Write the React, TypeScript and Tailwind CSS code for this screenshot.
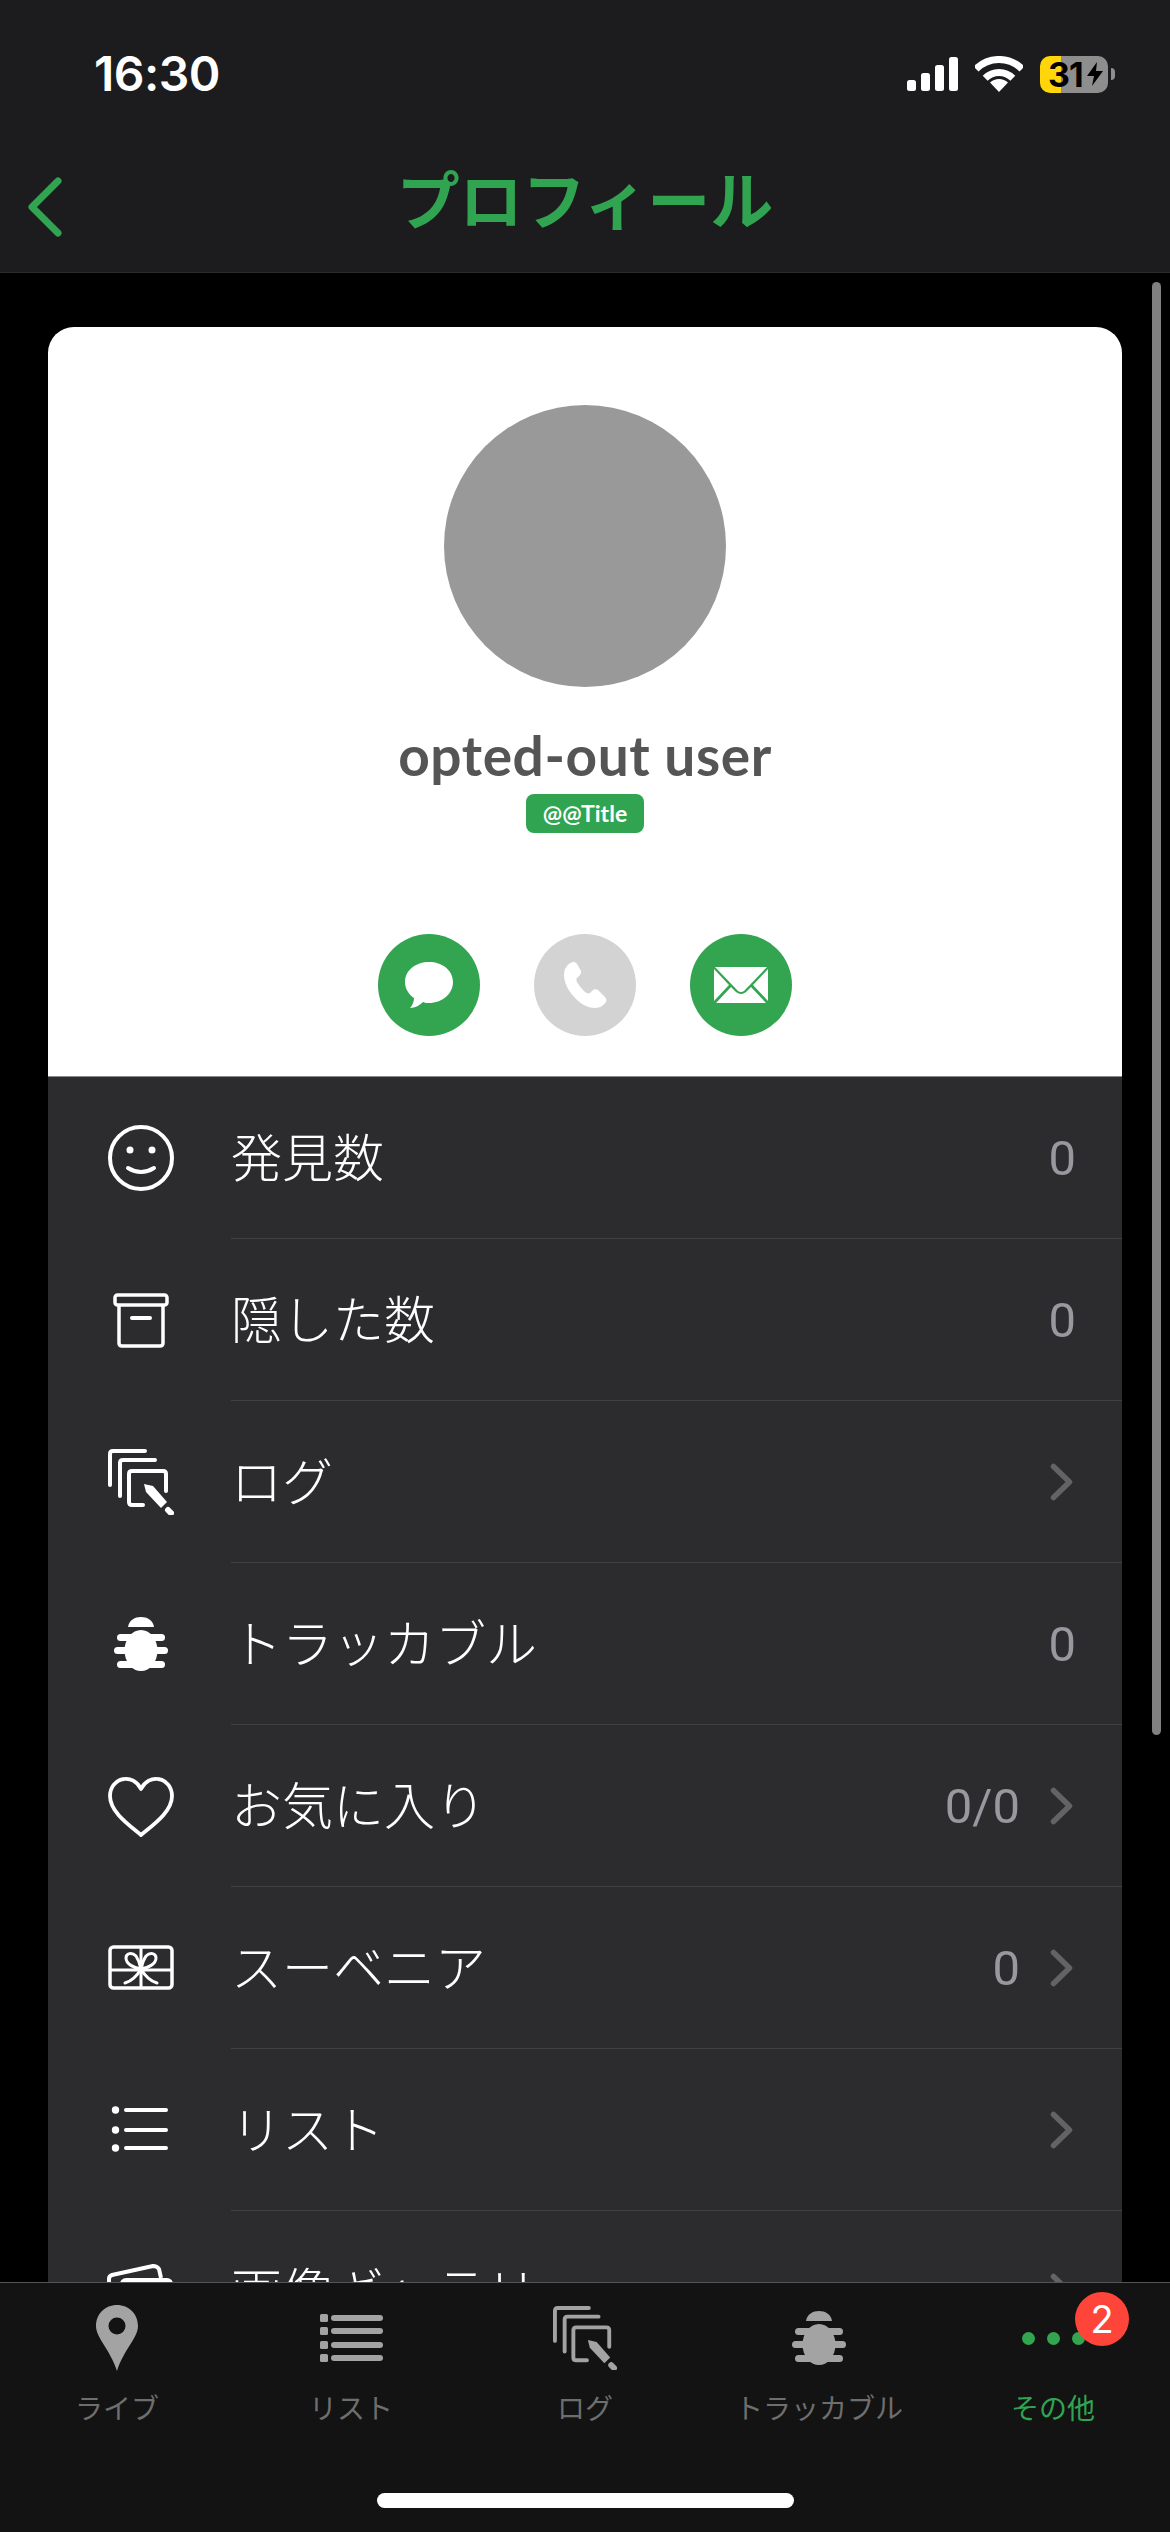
import React from 'react';

const GREEN = '#30a451';

function LogIcon({ color, className }: { color: string; className: string }) {
    return (
        <svg viewBox="0 0 66 66" className={className} fill="none" stroke={color} strokeWidth="4" strokeLinecap="round">
            <path d="M2 36V5Q2 2 5 2H37" />
            <path d="M12 47V14Q12 11 15 11H47" />
            <path d="M35 56H24Q21 56 21 53V25Q21 22 24 22H55Q58 22 58 25V42" />
            <path d="M36 35L45 37L59 53L53 59L38 43Z" fill={color} stroke="none" />
            <path d="M60 61L63 64" strokeWidth="6" />
        </svg>
    );
}

function BugIcon({ color, className }: { color: string; className: string }) {
    return (
        <svg viewBox="0 0 54 54" className={className} fill={color}>
            <path d="M14 10C15 3 21 0 27 0C33 0 39 3 40 10Z" />
            <ellipse cx="27" cy="33.5" rx="16.5" ry="20.5" />
            <rect x="3" y="17" width="48" height="7" rx="3.5" />
            <rect x="0" y="30" width="54" height="7" rx="3.5" />
            <rect x="3" y="44" width="48" height="7" rx="3.5" />
        </svg>
    );
}

const SmileIcon = () => (
    <svg viewBox="0 0 72 72" className="w-[72px] h-[72px]" fill="none" stroke="#fff" strokeWidth="4">
        <circle cx="36" cy="36" r="31" />
        <circle cx="25" cy="28" r="3.5" fill="#fff" stroke="none" />
        <circle cx="47" cy="28" r="3.5" fill="#fff" stroke="none" />
        <path d="M23 46Q36 54 49 46" strokeLinecap="round" />
    </svg>
);

const BoxIcon = () => (
    <svg viewBox="0 0 72 72" className="w-[72px] h-[72px]" fill="none" stroke="#fff" strokeWidth="3.5">
        <rect x="10" y="11" width="52" height="10" rx="2.5" />
        <path d="M14 21V59Q14 62 17 62H55Q58 62 58 59V21" />
        <path d="M27 34H45" strokeLinecap="round" strokeWidth="4" />
    </svg>
);

const HeartIcon = () => (
    <svg viewBox="0 0 72 72" className="w-[72px] h-[72px]" fill="none" stroke="#fff" strokeWidth="3.8" strokeLinejoin="round">
        <path d="M36 19C32 11 25 8 19 9C10 10 5 18 5 26C5 42 24 55 36 65C48 55 67 42 67 26C67 18 62 10 53 9C47 8 40 11 36 19Z" />
    </svg>
);

const GiftIcon = () => (
    <svg viewBox="0 0 72 72" className="w-[72px] h-[72px]" fill="none" stroke="#fff" strokeWidth="3">
        <rect x="5" y="15" width="62" height="41" rx="3.5" strokeWidth="3.5" />
        <path d="M5 38H67M36 15V56" />
        <path d="M36 37C29 36 21 32 21 26C21 21 27 20 31 24C33 27 35 32 36 37C37 32 39 27 41 24C45 20 51 21 51 26C51 32 43 36 36 37Z" />
        <path d="M36 37C32 44 27 49 20 51M36 37C40 44 45 49 52 51" strokeLinecap="round" />
    </svg>
);

const ListIcon = () => (
    <svg viewBox="0 0 72 72" className="w-[72px] h-[72px]" fill="#fff">
        <circle cx="10.5" cy="16" r="3.7" />
        <circle cx="10.5" cy="36" r="3.7" />
        <circle cx="10.5" cy="54" r="3.7" />
        <rect x="19" y="14" width="44" height="4" rx="2" />
        <rect x="19" y="34" width="44" height="4" rx="2" />
        <rect x="19" y="52" width="44" height="4" rx="2" />
    </svg>
);

const GalleryIcon = () => (
    <svg viewBox="0 0 72 72" className="w-[72px] h-[72px]" fill="none" stroke="#fff" strokeWidth="4" strokeLinejoin="round">
        <path d="M4 40V23Q4 20 7 19L48 10Q52 10 54 13L56 22" />
        <rect x="17" y="24" width="49" height="40" rx="4" />
    </svg>
);

const rows = [
    { label: '発見数', icon: <SmileIcon />, value: '0', chevron: false },
    { label: '隠した数', icon: <BoxIcon />, value: '0', chevron: false },
    { label: 'ログ', icon: <LogIcon color="#fff" className="w-[66px] h-[66px] mx-[3px]" />, value: '', chevron: true },
    { label: 'トラッカブル', icon: <BugIcon color="#fff" className="w-[54px] h-[54px] mx-[9px]" />, value: '0', chevron: false },
    { label: 'お気に入り', icon: <HeartIcon />, value: '0/0', chevron: true },
    { label: 'スーベニア', icon: <GiftIcon />, value: '0', chevron: true },
    { label: 'リスト', icon: <ListIcon />, value: '', chevron: true },
    { label: '画像ギャラリー', icon: <GalleryIcon />, value: '', chevron: true },
];

function Chevron() {
    return (
        <svg viewBox="0 0 23 38" className="w-[23px] h-[38px] shrink-0" fill="none" stroke="#636366" strokeWidth="5.5" strokeLinecap="round" strokeLinejoin="round">
            <path d="M3.5 3.5L19.500 19L3.500 34.500" />
        </svg>
    );
}

function StatusBar() {
    return (
        <div className="flex items-center justify-between pt-[53px] pl-[94px] pr-[55px]">
            <span className="text-[48px] leading-[42px] font-semibold text-white font-['Inter',sans-serif] tracking-[-0.5px]">16:30</span>
            <div className="flex items-center">
                <svg viewBox="0 0 51 34" className="w-[51px] h-[34px]" fill="#fff">
                    <rect x="0" y="23" width="9" height="11" rx="2.5" />
                    <rect x="14" y="16" width="9" height="18" rx="2.5" />
                    <rect x="28" y="8" width="9" height="26" rx="2.5" />
                    <rect x="42" y="0" width="9" height="34" rx="2.5" />
                </svg>
                <svg viewBox="0 0 48 36" className="w-[48px] h-[36px] ml-[17px]" fill="none" stroke="#fff" strokeWidth="7">
                    <path d="M1 13A32.5 32.5 0 0 1 47 13" />
                    <path d="M10.2 22.2A19.5 19.5 0 0 1 37.8 22.2" />
                    <path d="M24 36L15 26.500A13 13 0 0 1 33 26.500Z" fill="#fff" stroke="none" />
                </svg>
                <div className="ml-[17px] relative w-[68px] h-[37px] flex">
                    <div className="w-[21px] bg-[#ffd60a] rounded-l-[10px]" />
                    <div className="flex-1 bg-[#8e8e8e] rounded-r-[10px]" />
                    <div className="absolute inset-0 flex items-center pl-[8px]">
                        <span className="text-[34px] leading-[37px] font-bold text-black font-['Inter',sans-serif] tracking-[-1px]">31</span>
                        <svg viewBox="0 0 16 24" className="w-[16px] h-[24px] ml-[4px]" fill="#000">
                            <path d="M10 0L0 14H7L5 24L16 9H9Z" />
                        </svg>
                    </div>
                </div>
                <div className="ml-[3px] w-[4px] h-[12px] bg-[#8e8e8e] rounded-r-full" />
            </div>
        </div>
    );
}

function ProfileHead() {
    return (
        <div className="bg-white rounded-t-[26px] h-[749px] flex flex-col items-center pt-[78px]">
            <div className="w-[282px] h-[282px] rounded-full bg-[#999999] shrink-0" />
            <div className="mt-[38px] mb-[2px] h-[60px] leading-[60px] text-[55px] tracking-[0.6px] font-bold text-[#555555] font-['Lato',sans-serif]">opted-out user</div>
            <div className="mt-[7px] w-[118px] h-[39px] rounded-[8px] flex items-center justify-center text-[23px] font-bold text-white font-['Lato',sans-serif]" style={{ backgroundColor: GREEN }}>@@Title</div>
            <div className="mt-[101px] flex gap-[54px]">
                <div className="w-[102px] h-[102px] rounded-full bg-[#33a551] flex items-center justify-center">
                    <svg viewBox="0 0 48 46" className="w-[48px] h-[46px]" fill="#fff">
                        <path d="M24 0C37 0 48 8 48 20C48 32 37 41 24 41C22 41 20 41 18 40C15 43 10 46 5 46C5 46 9 42 9 36C3 32 0 26 0 20C0 8 11 0 24 0Z" />
                    </svg>
                </div>
                <div className="w-[102px] h-[102px] rounded-full bg-[#d3d3d3] flex items-center justify-center">
                    <svg viewBox="0 0 44 46" className="w-[44px] h-[46px]" fill="#fff">
                        <path d="M10 0C6 1 1 5 1 13C1 22 7 31 13 37C19 43 26 46 32 46C37 46 41 43 43 40C44 38 43 36 42 35L35 28C33 27 31 27 30 28L27 31C25 32 23 31 21 29C18 26 15 22 14 20C13 18 13 16 15 15L17 13C18 12 18 10 18 9L14 2C13 0 11 0 10 0Z" />
                    </svg>
                </div>
                <div className="w-[102px] h-[102px] rounded-full bg-[#33a551] flex items-center justify-center">
                    <svg viewBox="0 0 54 36" className="w-[54px] h-[36px]" fill="#fff">
                        <path d="M1 0H53L30 24Q27 26 24 24Z" />
                        <path d="M0 2L15 18L0 34Z" />
                        <path d="M54 2L39 18L54 34Z" />
                        <path d="M2 36L17 20L22 25Q27 29 32 25L37 20L52 36Z" />
                    </svg>
                </div>
            </div>
        </div>
    );
}

const tabs = [
    {
        label: 'ライブ',
        icon: (
            <svg viewBox="0 0 42 66" className="w-[42px] h-[66px]" fill="#a3a3a3" fillRule="evenodd">
                <path d="M21 0C9 0 0 9 0 21C0 33 14 44 21 66C28 44 42 33 42 21C42 9 33 0 21 0ZM21 12.500A8.500 8.500 0 1 1 21 29.500A8.500 8.500 0 1 1 21 12.500Z" />
            </svg>
        ),
    },
    {
        label: 'リスト',
        icon: (
            <svg viewBox="0 0 63 48" className="w-[63px] h-[48px]" fill="#a3a3a3">
                <rect x="0" y="0" width="8" height="8" rx="1.5" />
                <rect x="0" y="13" width="8" height="8" rx="1.5" />
                <rect x="0" y="27" width="8" height="8" rx="1.5" />
                <rect x="0" y="40" width="8" height="8" rx="1.5" />
                <rect x="11" y="1" width="52" height="6" rx="3" />
                <rect x="11" y="14" width="52" height="6" rx="3" />
                <rect x="11" y="28" width="52" height="6" rx="3" />
                <rect x="11" y="41" width="52" height="6" rx="3" />
            </svg>
        ),
    },
    { label: 'ログ', icon: <LogIcon color="#a3a3a3" className="w-[64px] h-[64px]" /> },
    { label: 'トラッカブル', icon: <BugIcon color="#a3a3a3" className="w-[54px] h-[54px]" /> },
];

function TabBar() {
    return (
        <div className="relative h-[250px] shrink-0 bg-[#131313] border-t border-[#555557] grid grid-cols-5 font-['Noto_Sans_CJK_JP',sans-serif]">
            {tabs.map(t => (
                <div key={t.label} className="flex flex-col items-center pt-[22px]">
                    <div className="h-[66px] flex items-center justify-center">{t.icon}</div>
                    <span className="mt-[18px] h-[36px] leading-[36px] text-[28px] text-[#6e6e6e]">{t.label}</span>
                </div>
            ))}
            <div className="flex flex-col items-center pt-[22px]">
                <div className="h-[66px] flex items-center justify-center gap-[12px]">
                    <div className="w-[13px] h-[13px] rounded-full bg-[#33a551]" />
                    <div className="w-[13px] h-[13px] rounded-full bg-[#33a551]" />
                    <div className="w-[13px] h-[13px] rounded-full bg-[#33a551]" />
                </div>
                <span className="mt-[18px] h-[36px] leading-[36px] text-[28px]" style={{ color: GREEN }}>その他</span>
            </div>
            {/* notification badge */}
            <div className="absolute left-[1075px] top-[9px] w-[54px] h-[54px] rounded-full bg-[#ff453a] flex items-center justify-center text-[38px] text-white font-['Inter',sans-serif]">2</div>
            {/* home indicator */}
            <div className="absolute left-[377px] top-[210px] w-[417px] h-[15px] rounded-full bg-white" />
        </div>
    );
}

export default function App() {
    return (
        <div className="relative w-[1170px] h-[2532px] overflow-hidden bg-black flex flex-col">
            <div className="h-[273px] shrink-0 bg-[#1c1c1e] border-b border-[#2c2c2e]">
                <StatusBar />
                <div className="mt-[57px] grid grid-cols-[1fr_auto_1fr] items-center h-[90px]">
                    <svg viewBox="0 0 36 60" className="ml-[27px] mt-[20px] w-[36px] h-[60px]" fill="none" stroke={GREEN} strokeWidth="7" strokeLinecap="round" strokeLinejoin="round">
                        <path d="M31 4L5 30L31 56" />
                    </svg>
                    <span className="text-[63px] leading-[90px] font-bold font-['Noto_Sans_CJK_JP',sans-serif]" style={{ color: GREEN }}>プロフィール</span>
                    <span />
                </div>
            </div>

            <div className="flex-1 min-h-0 overflow-hidden px-[48px] pt-[54px]">
                <ProfileHead />
                <div className="bg-[#2c2c2e] border-t border-[#8a8a8a]">
                    {rows.map(r => (
                        <div key={r.label} className="flex h-[162px]">
                            <div className="w-[183px] shrink-0 pl-[57px] flex items-center">
                                {r.icon}
                            </div>
                            <div className="flex-1 flex items-center justify-between pr-[49px] border-b border-[#414143]">
                                <span className="pb-[5px] text-[51px] font-light text-white font-['Noto_Sans_CJK_JP',sans-serif]">{r.label}</span>
                                <div className={r.chevron ? 'flex items-center gap-[30px]' : 'flex items-center -mr-[3px]'}>
                                    {r.value && <span className="pt-[3px] text-[49px] text-[#98989e] font-['Roboto',sans-serif]">{r.value}</span>}
                                    {r.chevron && <Chevron />}
                                </div>
                            </div>
                        </div>
                    ))}
                </div>
            </div>

            {/* scroll indicator */}
            <div className="absolute left-[1152px] top-[282px] w-[9px] h-[1453px] rounded-full bg-[#808080]" />

            <TabBar />
        </div>
    );
}
